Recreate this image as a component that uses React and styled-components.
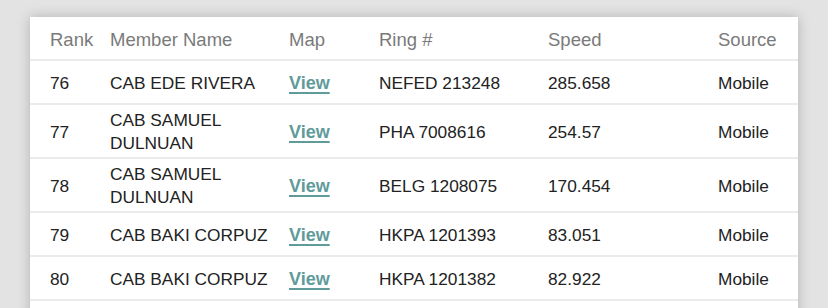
import styled, { createGlobalStyle } from "styled-components";

const GlobalStyle = createGlobalStyle`
  html, body {
    margin: 0;
    padding: 0;
    background: #e3e3e3;
    font-family: "Liberation Sans", Arial, sans-serif;
  }
`;

const rows = [
  { rank: 76, name: "CAB EDE RIVERA", ring: "NEFED 213248", speed: "285.658", source: "Mobile" },
  { rank: 77, name: "CAB SAMUEL DULNUAN", ring: "PHA 7008616", speed: "254.57", source: "Mobile" },
  { rank: 78, name: "CAB SAMUEL DULNUAN", ring: "BELG 1208075", speed: "170.454", source: "Mobile" },
  { rank: 79, name: "CAB BAKI CORPUZ", ring: "HKPA 1201393", speed: "83.051", source: "Mobile" },
  { rank: 80, name: "CAB BAKI CORPUZ", ring: "HKPA 1201382", speed: "82.922", source: "Mobile" },
];

export default function App() {
  return (
    <>
      <GlobalStyle />
      <Page>
        <Card>
          <HeaderRow>
            <HeadCell>Rank</HeadCell>
            <HeadCell>Member Name</HeadCell>
            <HeadCell>Map</HeadCell>
            <HeadCell>Ring #</HeadCell>
            <HeadCell>Speed</HeadCell>
            <HeadCell>Source</HeadCell>
          </HeaderRow>
          {rows.map((r) => (
            <Row key={r.rank}>
              <Cell>{r.rank}</Cell>
              <Cell>{r.name}</Cell>
              <Cell>
                <MapLink href="#">View</MapLink>
              </Cell>
              <Cell>{r.ring}</Cell>
              <Cell>{r.speed}</Cell>
              <Cell>{r.source}</Cell>
            </Row>
          ))}
        </Card>
      </Page>
    </>
  );
}

const Page = styled.div`
  padding: 17px 30px 0;
  height: 308px;
  box-sizing: border-box;
  overflow: hidden;
`;

const Card = styled.div`
  background: #fff;
  box-shadow: 0 0 12px rgba(0, 0, 0, 0.22);
  padding-bottom: 20px;
`;

const grid = `
  display: grid;
  grid-template-columns: 60px 179px 90px 169px 170px 1fr;
  padding: 0 20px;
  align-items: center;
  border-bottom: 2px solid #ebebeb;
`;

const HeaderRow = styled.div`
  ${grid}
  height: 40px;
  padding-top: 2px;
`;

const Row = styled.div`
  ${grid}
  min-height: 42px;
`;

const HeadCell = styled.div`
  font-size: 18.5px;
  color: #7a7a7a;
  line-height: 23px;
`;

const Cell = styled.div`
  font-size: 17.3px;
  color: #222;
  line-height: 23px;
  padding: 4px 8px 2px 0;
`;

const MapLink = styled.a`
  display: inline-block;
  line-height: 23px;
  color: #5f9b9b;
  font-size: 18px;
  font-weight: bold;
  text-decoration: underline;
  text-decoration-thickness: 2px;
  text-underline-offset: 3px;
`;
